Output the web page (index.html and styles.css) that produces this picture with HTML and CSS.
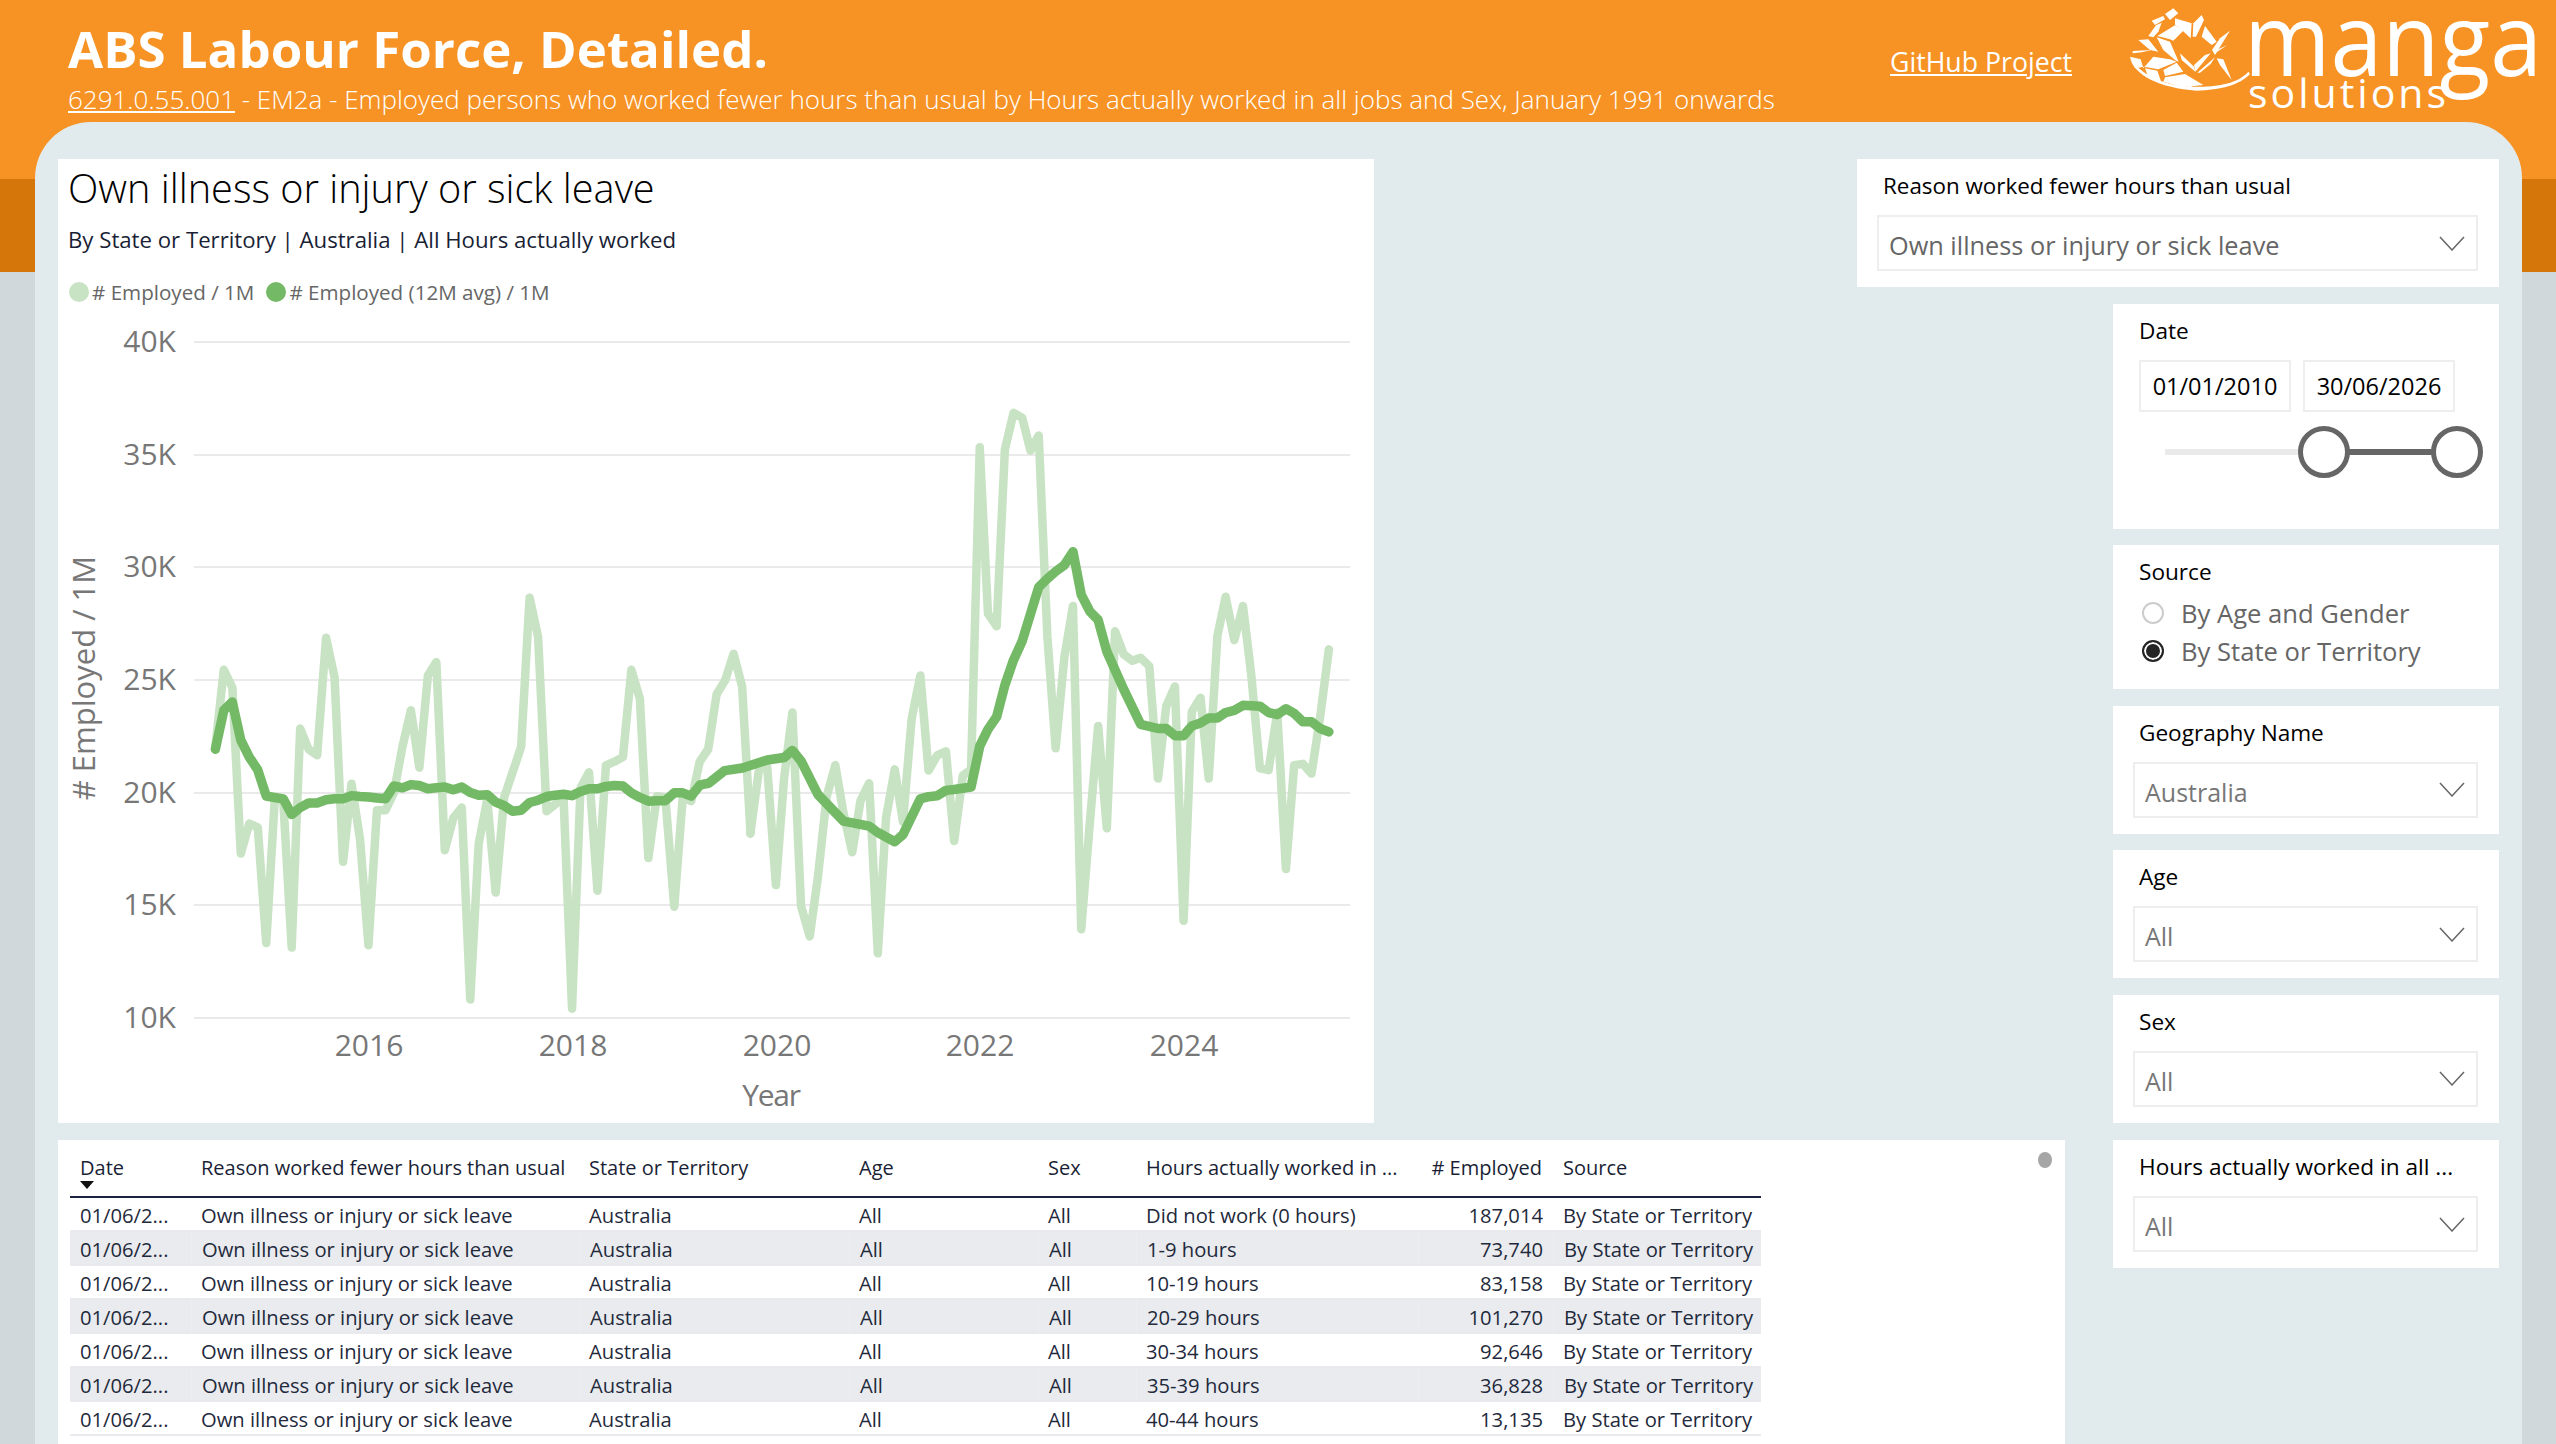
FILE: index.html
```html
<!DOCTYPE html>
<html lang="en">
<head>
  <meta charset="UTF-8">
  <title>ABS Labour Force, Detailed.</title>
  <link rel="stylesheet" href="styles.css">
</head>
<body>

  <header class="top">
    <div class="heading">
      <h1>ABS Labour Force, Detailed.</h1>
      <p><a href="#">6291.0.55.001</a> - EM2a - Employed persons who worked fewer hours than usual by Hours actually worked in all jobs and Sex, January 1991 onwards</p>
    </div>
    <a class="github" href="#">GitHub Project</a>
    <svg class="logo" viewBox="0 0 1308 366">
      <g class="logo-mark">
        <polygon points="135,42 160,25 175,40 150,60"/>
        <polygon points="95,62 130,48 135,58 105,75"/>
        <polygon points="108,76 125,68 115,95 100,112 85,108"/>
        <polygon points="165,55 215,70 212,115 180,85 165,75"/>
        <polygon points="245,45 252,60 228,110 218,110 220,70"/>
        <polygon points="255,78 290,125 275,135 245,110"/>
        <polygon points="330,92 285,165 276,150 300,115"/>
        <polygon points="322,135 285,160 290,150"/>
        <polygon points="110,112 150,125 176,185 165,180 130,150"/>
        <polygon points="112,108 165,76 192,90 160,122 150,118"/>
        <polygon points="55,120 85,118 115,155 90,150"/>
        <polygon points="38,153 95,150 65,157 38,160"/>
        <polygon points="272,160 226,215 222,195 255,165"/>
        <polygon points="180,160 222,200 226,215 185,180"/>
        <polygon points="290,175 310,178 335,240 300,195"/>
        <polygon points="232,218 285,172 272,192 240,218"/>
        <polygon points="30,170 62,178 70,205 100,170 150,178 170,185 115,208 72,200 45,205"/>
        <polygon points="75,205 112,212 125,250 85,232"/>
        <polygon points="130,210 170,188 190,215 135,228"/>
        <polygon points="135,232 195,222 250,255 190,262 130,245"/>
        <polygon points="210,235 195,258 215,262"/>
        <path d="M30 172C40 225 120 265 230 272C300 270 360 255 390 222L385 215C350 255 280 262 205 260C130 255 60 225 30 172Z"/>
      </g>
      <text class="logo-name" x="372" y="228" textLength="894" lengthAdjust="spacingAndGlyphs">manga</text>
      <text class="logo-sub" x="384" y="324" textLength="594" lengthAdjust="spacing">solutions</text>
    </svg>
  </header>

  <main class="panel">

    <section class="card chart-card">
      <h2>Own illness or injury or sick leave</h2>
      <p class="chart-sub">By State or Territory | Australia | All Hours actually worked</p>
      <div class="legend">
        <span class="dot dot-light"></span><span># Employed / 1M</span>
        <span class="dot dot-dark"></span><span># Employed (12M avg) / 1M</span>
      </div>
      <svg class="chart" viewBox="58 310 1316 812">
        <g class="grid">
          <line x1="194" x2="1350" y1="342" y2="342"/>
          <line x1="194" x2="1350" y1="455" y2="455"/>
          <line x1="194" x2="1350" y1="567" y2="567"/>
          <line x1="194" x2="1350" y1="680" y2="680"/>
          <line x1="194" x2="1350" y1="793" y2="793"/>
          <line x1="194" x2="1350" y1="905" y2="905"/>
          <line x1="194" x2="1350" y1="1018" y2="1018"/>
        </g>
        <g class="ticks ticks-y">
          <text x="176" y="340">40K</text>
          <text x="176" y="453">35K</text>
          <text x="176" y="565">30K</text>
          <text x="176" y="678">25K</text>
          <text x="176" y="791">20K</text>
          <text x="176" y="903">15K</text>
          <text x="176" y="1016">10K</text>
        </g>
        <g class="ticks ticks-x">
          <text x="369" y="1044">2016</text>
          <text x="573" y="1044">2018</text>
          <text x="777" y="1044">2020</text>
          <text x="980" y="1044">2022</text>
          <text x="1184" y="1044">2024</text>
          <text class="year" x="771" y="1094">Year</text>
        </g>
        <text class="ticks axis-title" transform="translate(83 678) rotate(-90)">
          # Employed / 1M
        </text>

        <!-- monthly values, traced in two runs -->
        <g class="series series-light">
          <polyline transform="translate(60 320) scale(.4464 .4591)" points="348,930 367,762 386,800 405,1162 424,1097 443,1105 462,1357 481,1045 500,1045 519,1367 538,890 557,935 576,948 596,692 615,778 634,1180 653,1010 672,1130 691,1362 710,1068 729,1068 748,1030 767,930 786,850 805,975 824,775 843,745 862,1155 881,1085 900,1062 919,1480 938,1140 957,1045 976,1247 995,1040 1014,985 1033,930 1052,605 1071,690 1090,1070 1109,1055 1128,1040 1147,1500 1166,1020 1185,985 1204,1243 1223,970 1242,962 1261,952 1280,762 1299,825 1318,1172 1337,1037 1356,1040 1376,1278 1395,1040 1414,1048 1433,962 1452,935 1471,815 1490,785 1509,727 1528,798 1547,1118"/>
          <polyline transform="translate(700 380) scale(.4337 .4209)" points="116,1078 136,925 155,920 175,1200 194,945 213,790 233,1250 253,1322 272,1180 292,990 312,915 331,1030 351,1122 370,1000 390,958 410,1362 429,1040 449,925 468,1050 488,805 508,702 527,928 547,892 567,882 586,1095 606,940 625,925 645,160 664,555 684,585 703,165 723,78 743,90 762,168 781,132 801,610 820,875 840,660 860,537 879,1305 899,1050 918,822 938,1065 957,597 977,652 997,667 1016,660 1036,680 1056,947 1075,775 1095,728 1115,1285 1134,788 1154,755 1173,947 1193,608 1212,515 1232,618 1252,537 1271,700 1291,922 1311,927 1331,790 1351,1162 1370,915 1390,912 1410,935 1430,800 1450,640"/>
        </g>
        <g class="series series-dark">
          <polyline transform="translate(60 320) scale(.4464 .4591)" points="348,935 367,850 386,832 405,915 424,952 443,980 462,1037 481,1040 500,1043 519,1077 538,1062 557,1052 576,1052 596,1045 615,1043 634,1043 653,1036 672,1038 691,1039 710,1041 729,1043 748,1015 767,1019 786,1012 805,1014 824,1021 843,1019 862,1017 881,1023 900,1017 919,1029 938,1035 957,1034 976,1050 995,1058 1014,1070 1033,1068 1052,1051 1071,1046 1090,1038 1109,1035 1128,1033 1147,1036 1166,1027 1185,1021 1204,1021 1223,1016 1242,1014 1261,1015 1280,1030 1299,1040 1318,1048 1337,1047 1356,1047 1376,1030 1395,1030 1414,1037 1433,1014"/>
          <polyline transform="translate(700 380) scale(.4337 .4209)" points="0,962 20,958 57,928 98,922 155,903 194,897 213,880 233,905 272,985 331,1048 390,1060 410,1075 449,1097 468,1080 508,995 527,990 547,988 567,975 586,973 625,967 645,870 664,830 684,800 703,725 723,665 743,620 781,492 801,472 820,455 840,440 860,408 879,510 899,550 918,570 938,645 977,735 1016,818 1056,828 1075,828 1095,845 1115,845 1134,822 1154,815 1173,803 1193,803 1212,790 1232,785 1252,773 1291,775 1311,790 1331,795 1351,781 1370,792 1390,812 1410,812 1430,828 1450,836"/>
        </g>
      </svg>
    </section>

    <section class="card slicer slicer-reason">
      <div class="slicer-label">Reason worked fewer hours than usual</div>
      <div class="dropdown dropdown-wide">
        <span>Own illness or injury or sick leave</span>
        <svg class="chevron" viewBox="0 0 26 15"><polyline points="1,1 13,14 25,1"/></svg>
      </div>
    </section>

    <section class="card slicer slicer-date">
      <div class="slicer-label">Date</div>
      <div class="date-inputs">
        <div class="date-box">01/01/2010</div>
        <div class="date-box">30/06/2026</div>
      </div>
      <div class="slider">
        <div class="slider-range"></div>
        <div class="thumb thumb-from"></div>
        <div class="thumb thumb-to"></div>
      </div>
    </section>

    <section class="card slicer slicer-source">
      <div class="slicer-label">Source</div>
      <div class="radio-row"><span class="radio"></span>By Age and Gender</div>
      <div class="radio-row"><span class="radio radio-on"></span>By State or Territory</div>
    </section>

    <section class="card slicer slicer-geo">
      <div class="slicer-label">Geography Name</div>
      <div class="dropdown">
        <span>Australia</span>
        <svg class="chevron" viewBox="0 0 26 15"><polyline points="1,1 13,14 25,1"/></svg>
      </div>
    </section>

    <section class="card slicer slicer-age">
      <div class="slicer-label">Age</div>
      <div class="dropdown">
        <span>All</span>
        <svg class="chevron" viewBox="0 0 26 15"><polyline points="1,1 13,14 25,1"/></svg>
      </div>
    </section>

    <section class="card slicer slicer-sex">
      <div class="slicer-label">Sex</div>
      <div class="dropdown">
        <span>All</span>
        <svg class="chevron" viewBox="0 0 26 15"><polyline points="1,1 13,14 25,1"/></svg>
      </div>
    </section>

    <section class="card table-card">
      <span class="scroll-dot"></span>
      <table>
        <colgroup>
          <col class="col-date"><col class="col-reason"><col class="col-state"><col class="col-age">
          <col class="col-sex"><col class="col-hours"><col class="col-employed"><col class="col-source">
        </colgroup>
        <thead>
          <tr>
            <th>Date<span class="sort"></span></th>
            <th>Reason worked fewer hours than usual</th>
            <th>State or Territory</th>
            <th>Age</th>
            <th>Sex</th>
            <th>Hours actually worked in ...</th>
            <th class="num"># Employed</th>
            <th>Source</th>
          </tr>
        </thead>
        <tbody>
          <tr><td>01/06/2...</td><td>Own illness or injury or sick leave</td><td>Australia</td><td>All</td><td>All</td><td>Did not work (0 hours)</td><td class="num">187,014</td><td>By State or Territory</td></tr>
          <tr><td>01/06/2...</td><td>Own illness or injury or sick leave</td><td>Australia</td><td>All</td><td>All</td><td>1-9 hours</td><td class="num">73,740</td><td>By State or Territory</td></tr>
          <tr><td>01/06/2...</td><td>Own illness or injury or sick leave</td><td>Australia</td><td>All</td><td>All</td><td>10-19 hours</td><td class="num">83,158</td><td>By State or Territory</td></tr>
          <tr><td>01/06/2...</td><td>Own illness or injury or sick leave</td><td>Australia</td><td>All</td><td>All</td><td>20-29 hours</td><td class="num">101,270</td><td>By State or Territory</td></tr>
          <tr><td>01/06/2...</td><td>Own illness or injury or sick leave</td><td>Australia</td><td>All</td><td>All</td><td>30-34 hours</td><td class="num">92,646</td><td>By State or Territory</td></tr>
          <tr><td>01/06/2...</td><td>Own illness or injury or sick leave</td><td>Australia</td><td>All</td><td>All</td><td>35-39 hours</td><td class="num">36,828</td><td>By State or Territory</td></tr>
          <tr><td>01/06/2...</td><td>Own illness or injury or sick leave</td><td>Australia</td><td>All</td><td>All</td><td>40-44 hours</td><td class="num">13,135</td><td>By State or Territory</td></tr>
        </tbody>
      </table>
    </section>

    <section class="card slicer slicer-hours">
      <div class="slicer-label">Hours actually worked in all ...</div>
      <div class="dropdown">
        <span>All</span>
        <svg class="chevron" viewBox="0 0 26 15"><polyline points="1,1 13,14 25,1"/></svg>
      </div>
    </section>

  </main>

</body>
</html>
```
FILE: styles.css
```css
html, body {
  margin: 0;
  height: 100%;
}

body {
  width: 2556px;
  height: 1444px;
  overflow: hidden;
  font-family: "Open Sans", "Noto Sans", sans-serif;
  color: #000;
  background: linear-gradient(#f79324 0 179px, #d47609 179px 272px, #d0d8db 272px);
}

/* header */

.top {
  display: flex;
  height: 122px;
  color: #fff;
}

.top a {
  color: #fff;
}

.heading {
  flex: 0 0 1890px;
  padding: 18px 0 0 68px;
  box-sizing: border-box;
}

.heading h1 {
  margin: 0;
  font-size: 51px;
  line-height: 60px;
  font-weight: 700;
}

.heading p {
  margin: 3px 0 0;
  font-size: 26px;
  line-height: 36px;
  font-weight: 300;
  white-space: nowrap;
}

.github {
  margin-top: 44px;
  font-size: 26.7px;
  line-height: 36px;
  height: 36px;
}

.logo {
  margin-left: auto;
  width: 436px;
  height: 122px;
}

.logo-mark {
  fill: #fff;
}

.logo-name, .logo-sub {
  fill: #fff;
}

.logo-name {
  font-size: 303px;
}

.logo-sub {
  font-size: 123px;
}

/* main area */

.panel {
  width: 2487px;
  height: 1322px;
  margin-left: 35px;
  padding: 37px 0 0 23px;
  box-sizing: border-box;
  background: #e1eaed;
  border-radius: 56px 56px 0 0;
  display: grid;
  grid-template-columns: 1316px 483px 208px 48px 386px;
  grid-template-rows: 128px 225px 144px 128px 128px 128px 1fr;
  row-gap: 16.5px;
}

.card {
  background: #fff;
}

/* chart */

.chart-card {
  grid-column: 1;
  grid-row: 1 / 7;
  padding-top: 2px;
  box-sizing: border-box;
  overflow: hidden;
}

.chart-card h2 {
  margin: 0 0 0 10px;
  font-size: 39.7px;
  line-height: 54px;
  font-weight: 300;
  color: #000;
}

.chart-sub {
  margin: 9px 0 0 10px;
  font-size: 22.2px;
  line-height: 32px;
  color: #1a1f36;
}

.legend {
  display: flex;
  align-items: center;
  height: 24px;
  margin: 24px 0 0 11px;
  font-size: 20.6px;
  color: #666;
}

.dot {
  width: 20px;
  height: 20px;
  border-radius: 50%;
  margin-right: 3px;
}

.dot-light {
  background: #c8e3c3;
}

.dot-dark {
  background: #74b966;
  margin-left: 12px;
}

.chart {
  display: block;
  width: 1316px;
  height: 812px;
  margin-top: 6px;
}

.grid line {
  stroke: #eaeaea;
  stroke-width: 2;
}

.ticks text, .axis-title {
  font-size: 30px;
  fill: #777;
  dominant-baseline: central;
}

.ticks .year {
  letter-spacing: -1.2px;
}

.axis-title {
  font-size: 31px;
}

.ticks-y text {
  text-anchor: end;
}

.ticks-x text, .axis-title {
  text-anchor: middle;
}

.series polyline {
  fill: none;
  stroke-linejoin: round;
  stroke-linecap: round;
  vector-effect: non-scaling-stroke;
}

.series-light polyline {
  stroke: #c8e3c3;
  stroke-width: 8.5;
}

.series-dark polyline {
  stroke: #74b966;
  stroke-width: 9.5;
}

/* slicers */

.slicer {
  padding: 0 21px 0 20px;
  box-sizing: border-box;
  overflow: hidden;
}

.slicer-label {
  margin: 11px 0 0 6px;
  height: 32px;
  font-size: 22.6px;
  line-height: 32px;
  white-space: nowrap;
}

.slicer-reason .slicer-label {
  font-size: 22.4px;
}

.dropdown {
  display: flex;
  align-items: center;
  justify-content: space-between;
  height: 56px;
  margin-top: 13px;
  padding: 4px 11px 0 10px;
  box-sizing: border-box;
  border: 2px solid #eee;
  font-size: 25px;
  color: #777;
}

.dropdown-wide {
  font-size: 25.3px;
  color: #666;
}

.chevron {
  width: 26px;
  height: 15px;
  margin-top: -4px;
}

.chevron polyline {
  fill: none;
  stroke: #666;
  stroke-width: 1.5;
}

.slicer-reason {
  grid-column: 3 / 6;
  grid-row: 1;
}

.slicer-date {
  grid-column: 5;
  grid-row: 2;
}

.slicer-source {
  grid-column: 5;
  grid-row: 3;
}

.slicer-geo {
  grid-column: 5;
  grid-row: 4;
}

.slicer-age {
  grid-column: 5;
  grid-row: 5;
}

.slicer-sex {
  grid-column: 5;
  grid-row: 6;
}

.slicer-hours {
  grid-column: 5;
  grid-row: 7;
  height: 128px;
  margin-top: 1px;
}

.date-inputs {
  display: flex;
  gap: 12px;
  margin: 13px 0 0 6px;
}

.date-box {
  width: 152px;
  height: 52px;
  box-sizing: border-box;
  border: 2px solid #eee;
  text-align: center;
  font-size: 23.5px;
  line-height: 48px;
}

.slider {
  position: relative;
  width: 292px;
  height: 6px;
  margin: 37px 0 0 32px;
  background: #eaeaea;
}

.slider-range {
  position: absolute;
  left: 159px;
  right: 0;
  top: 0;
  bottom: 0;
  background: #666;
}

.thumb {
  position: absolute;
  top: -23px;
  width: 52px;
  height: 52px;
  box-sizing: border-box;
  border: 5px solid #666;
  border-radius: 50%;
  background: #fff;
}

.thumb-from {
  left: 133px;
}

.thumb-to {
  left: 266px;
}

.radio-row {
  display: flex;
  align-items: center;
  height: 38px;
  font-size: 25.6px;
  color: #666;
}

.slicer-source .slicer-label + .radio-row {
  margin-top: 6px;
}

.radio {
  width: 22px;
  height: 22px;
  margin: 0 17px 0 9px;
  box-sizing: border-box;
  border: 2px solid #ccc;
  border-radius: 50%;
  background: #fff;
}

.radio-on {
  border-color: #252525;
  background: #252525;
  box-shadow: inset 0 0 0 2px #fff;
}

/* table */

.table-card {
  position: relative;
  grid-column: 1 / 4;
  grid-row: 7;
  margin-top: 1px;
  padding-left: 12px;
  overflow: hidden;
}

.scroll-dot {
  position: absolute;
  left: 1980px;
  top: 12px;
  width: 14px;
  height: 16px;
  border-radius: 50%;
  background: #a6a6a6;
}

table {
  width: 1691px;
  table-layout: fixed;
  border-collapse: separate;
  border-spacing: 0;
  font-size: 20.2px;
  color: #1f2a3c;
}

.col-date { width: 121px; }
.col-reason { width: 388px; }
.col-state { width: 270px; }
.col-age { width: 189px; }
.col-sex { width: 98px; }
.col-hours { width: 282px; }
.col-employed { width: 135px; }
.col-source { width: 208px; }

th {
  height: 58px;
  padding: 12px 10px 0;
  box-sizing: border-box;
  vertical-align: top;
  text-align: left;
  font-size: 20px;
  font-weight: 400;
  line-height: 32px;
  white-space: nowrap;
  color: #1a1f36;
  border-bottom: 2px solid #1a2340;
}

th.num {
  padding-right: 11px;
}

td {
  height: 34px;
  padding: 2px 10px 0;
  box-sizing: border-box;
  white-space: nowrap;
  line-height: 30px;
  border-bottom: 2px solid #e9eaed;
}

tbody tr:nth-child(even) td {
  background: #e9ebee;
}

tbody tr:nth-child(even) td + td {
  border-left: 1px solid #edeef0;
}

.num {
  text-align: right;
}

.sort {
  display: block;
  width: 0;
  height: 0;
  border-left: 7px solid transparent;
  border-right: 7px solid transparent;
  border-top: 8px solid #111;
  margin-top: -3px;
}
```
